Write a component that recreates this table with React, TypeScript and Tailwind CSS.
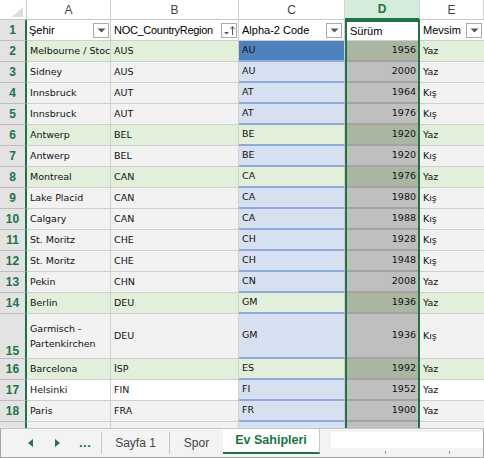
import React from 'react';

type Band = 'green' | 'gray' | 'white';

const rows: [string, string, string, string, string][] = [
  ['Melbourne / Stockholm', 'AUS', 'AU', '1956', 'Yaz'],
  ['Sidney', 'AUS', 'AU', '2000', 'Yaz'],
  ['Innsbruck', 'AUT', 'AT', '1964', 'Kış'],
  ['Innsbruck', 'AUT', 'AT', '1976', 'Kış'],
  ['Antwerp', 'BEL', 'BE', '1920', 'Yaz'],
  ['Antwerp', 'BEL', 'BE', '1920', 'Kış'],
  ['Montreal', 'CAN', 'CA', '1976', 'Yaz'],
  ['Lake Placid', 'CAN', 'CA', '1980', 'Kış'],
  ['Calgary', 'CAN', 'CA', '1988', 'Kış'],
  ['St. Moritz', 'CHE', 'CH', '1928', 'Kış'],
  ['St. Moritz', 'CHE', 'CH', '1948', 'Kış'],
  ['Pekin', 'CHN', 'CN', '2008', 'Yaz'],
  ['Berlin', 'DEU', 'GM', '1936', 'Yaz'],
  ['Garmisch - Partenkirchen', 'DEU', 'GM', '1936', 'Kış'],
  ['Barcelona', 'İSP', 'ES', '1992', 'Yaz'],
  ['Helsinki', 'FIN', 'FI', '1952', 'Yaz'],
  ['Paris', 'FRA', 'FR', '1900', 'Yaz'],
];

const greenRows = new Set([2, 6, 8, 14, 16]);
const whiteRows = new Set([17]);

const bandOf = (n: number): Band => (greenRows.has(n) ? 'green' : whiteRows.has(n) ? 'white' : 'gray');

const plainBg: Record<Band, string> = {
  green: 'bg-[#e2efda]',
  gray: 'bg-[#f2f2f2]',
  white: 'bg-white',
};

function DropButton({ sorted }: { sorted?: boolean }) {
  return (
    <div className="w-[16px] h-[15px] border border-[#ababab] bg-white flex items-center justify-center flex-shrink-0">
      {sorted ? (
        <svg width="14" height="13" viewBox="0 0 14 13">
          <polygon points="2,8 7,8 4.5,10.5" fill="#555" />
          <line x1="10.5" y1="3" x2="10.5" y2="11" stroke="#555" strokeWidth="1" />
          <polyline points="8.5,5 10.5,2.5 12.5,5" fill="none" stroke="#555" strokeWidth="1" />
        </svg>
      ) : (
        <svg width="9" height="5" viewBox="0 0 9 5">
          <polygon points="0.5,0.5 8.5,0.5 4.5,4.5" fill="#555" />
        </svg>
      )}
    </div>
  );
}

function RowHeader({ n, tall }: { n?: number; tall?: boolean }) {
  return (
    <div
      className={`w-[27px] flex-shrink-0 bg-[#e3e3e3] border-r-2 border-r-[#217346] border-b border-b-[#bdbdbd] flex justify-center ${
        tall ? 'items-end pb-[1px]' : 'items-center'
      }`}
    >
      {n !== undefined && (
        <span className="text-[12px] font-bold text-[#217346] leading-none" style={{ fontFamily: '"Liberation Sans", Arial, sans-serif' }}>
          {n}
        </span>
      )}
    </div>
  );
}

function DataRow({ n, cells }: { n: number; cells: [string, string, string, string, string] }) {
  const band = bandOf(n);
  const tall = n === 15;
  const cBg = n === 2 ? 'bg-[#4f81bd]' : band === 'green' ? 'bg-[#e2efda]' : 'bg-[#d6e0f0]';
  const dBg = band === 'green' ? 'bg-[#aab6a1]' : 'bg-[#bfbfbf]';
  const text = 'text-[9.5px] text-[#111] whitespace-nowrap overflow-hidden';
  return (
    <div className={`flex ${tall ? 'h-[45px]' : 'h-[21px]'}`} style={{ fontFamily: '"DejaVu Sans", Verdana, sans-serif' }}>
      <RowHeader n={n} tall={tall} />
      <div className={`w-[84px] flex-shrink-0 ${plainBg[band]} border-r border-b border-[#cfcfcf] flex items-center pl-[3px] ${text}`}>
        {tall ? (
          <span className="leading-[15px]">
            Garmisch -<br />
            Partenkirchen
          </span>
        ) : (
          <span className="block w-[80px] overflow-hidden">{cells[0]}</span>
        )}
      </div>
      <div className={`w-[128px] flex-shrink-0 ${plainBg[band]} border-r border-b border-[#cfcfcf] flex items-center pl-[3px] ${text}`}>
        {cells[1]}
      </div>
      <div className={`w-[106px] flex-shrink-0 ${cBg} border-r border-r-[#cfcfcf] border-b-2 border-b-[#8eaadb] flex items-center pl-[3px] ${text}`}>
        {cells[2]}
      </div>
      <div className={`w-[75px] flex-shrink-0 ${dBg} border-b-2 border-b-[#a3a3a3] flex items-center justify-end pr-[4px] ${text}`}>
        {cells[3]}
      </div>
      <div className={`w-[64px] flex-shrink-0 ${plainBg[band]} border-b border-[#cfcfcf] flex items-center pl-[3px] ${text}`}>
        {cells[4]}
      </div>
    </div>
  );
}

export default function App() {
  const head = { fontFamily: '"Liberation Sans", Arial, sans-serif' };
  return (
    <div className="w-[484px] h-[458px] bg-white overflow-hidden flex flex-col select-none">
      {/* Grid */}
      <div className="relative h-[428px] overflow-hidden flex-shrink-0">
        {/* Column letters */}
        <div className="flex h-[20px]" style={head}>
          <div className="w-[27px] flex-shrink-0 bg-white border-r border-b border-[#c6c6c6] flex items-end justify-end pr-[3px] pb-[2px]">
            <svg width="11" height="10" viewBox="0 0 11 10">
              <polygon points="11,0 11,10 0,10" fill="#dcdcdc" />
            </svg>
          </div>
          {['A', 'B', 'C', 'D', 'E'].map((l, i) => (
            <div
              key={l}
              className={`${['w-[84px]', 'w-[128px]', 'w-[106px]', 'w-[75px]', 'w-[64px]'][i]} flex-shrink-0 border-r border-[#d4d4d4] flex items-center justify-center text-[12px] ${
                l === 'D'
                  ? 'bg-[#d3ecdc] text-[#217346] font-bold border-b-2 border-b-[#217346]'
                  : 'bg-white text-[#444] border-b border-b-[#c6c6c6]'
              }`}
            >
              {l}
            </div>
          ))}
        </div>

        {/* Table header row */}
        <div className="flex h-[21px]" style={head}>
          <RowHeader n={1} />
          <div className="w-[84px] flex-shrink-0 bg-white border-r border-b border-[#cfcfcf] flex items-center justify-between pl-[2px] pr-[1px] text-[11px] text-black">
            Şehir
            <DropButton />
          </div>
          <div className="w-[128px] flex-shrink-0 bg-white border-r border-b border-[#cfcfcf] flex items-center justify-between pl-[3px] pr-[1px] text-[11px] text-black">
            <span className="tracking-[-0.3px]">NOC_CountryRegion</span>
            <DropButton sorted />
          </div>
          <div className="w-[106px] flex-shrink-0 bg-white border-r border-b border-[#cfcfcf] flex items-center justify-between pl-[3px] pr-[2px] text-[11px] text-black">
            Alpha-2 Code
            <DropButton />
          </div>
          <div className="w-[75px] flex-shrink-0 bg-white border-b border-[#cfcfcf] flex items-center pl-[5px] pt-[2px] text-[11px] text-black">
            Sürüm
          </div>
          <div className="w-[64px] flex-shrink-0 bg-white border-b border-[#cfcfcf] flex items-center justify-between pl-[3px] pr-[2px] text-[11px] text-black">
            Mevsim
            <DropButton />
          </div>
        </div>

        {rows.map((r, i) => (
          <DataRow key={i} n={i + 2} cells={r} />
        ))}

        {/* Row 19 (partly visible) */}
        <div className="flex h-[21px]">
          <RowHeader />
          <div className="w-[84px] flex-shrink-0 bg-[#f2f2f2] border-r border-[#cfcfcf]" />
          <div className="w-[128px] flex-shrink-0 bg-[#f2f2f2] border-r border-[#cfcfcf]" />
          <div className="w-[106px] flex-shrink-0 bg-[#d6e0f0] border-r border-[#cfcfcf]" />
          <div className="w-[75px] flex-shrink-0 bg-[#bfbfbf]" />
          <div className="w-[64px] flex-shrink-0 bg-[#f2f2f2]" />
        </div>

        {/* Column D selection outline */}
        <div className="absolute left-[345px] top-[20px] w-[75px] h-[420px] border-2 border-[#217346] pointer-events-none" />
      </div>

      {/* Sheet tabs */}
      <div
        className="h-[30px] flex border-t border-[#c6c6c6] border-x border-b border-x-[#a6a6a6] border-b-[#a6a6a6] bg-[#f3f3f3]"
        style={head}
      >
        <div className="w-[100px] flex items-center pl-[27px] flex-shrink-0">
          <svg width="5" height="8" viewBox="0 0 5 8" className="mr-[22px]">
            <polygon points="5,0 5,8 0,4" fill="#217346" />
          </svg>
          <svg width="5" height="8" viewBox="0 0 5 8" className="mr-[19px]">
            <polygon points="0,0 0,8 5,4" fill="#217346" />
          </svg>
          <span className="text-[13px] font-bold text-[#217346] leading-[14px] tracking-[0.5px]">...</span>
        </div>
        <div className="w-[68px] flex-shrink-0 flex items-center justify-center text-[12px] text-[#444] border-l border-[#c6c6c6] my-[3px]">
          Sayfa 1
        </div>
        <div className="w-[54px] flex-shrink-0 flex items-center justify-center text-[12px] text-[#444] border-l border-[#c6c6c6] my-[3px]">
          Spor
        </div>
        <div className="w-[97px] flex-shrink-0 bg-white flex items-center justify-center text-[12.5px] font-bold text-[#217346] border-b-2 border-b-[#217346] mb-[3px] border-r border-r-[#c6c6c6]">
          Ev Sahipleri
        </div>
        <div className="flex-1 relative flex items-start pt-[3px] pl-[11px]">
          <div className="h-[16px] flex-1 bg-white" />
          <div className="absolute left-[65px] bottom-[3px] w-px h-[3px] bg-[#9a9a9a]" />
          <div className="absolute left-[129px] bottom-[3px] w-px h-[3px] bg-[#9a9a9a]" />
        </div>
      </div>
    </div>
  );
}
